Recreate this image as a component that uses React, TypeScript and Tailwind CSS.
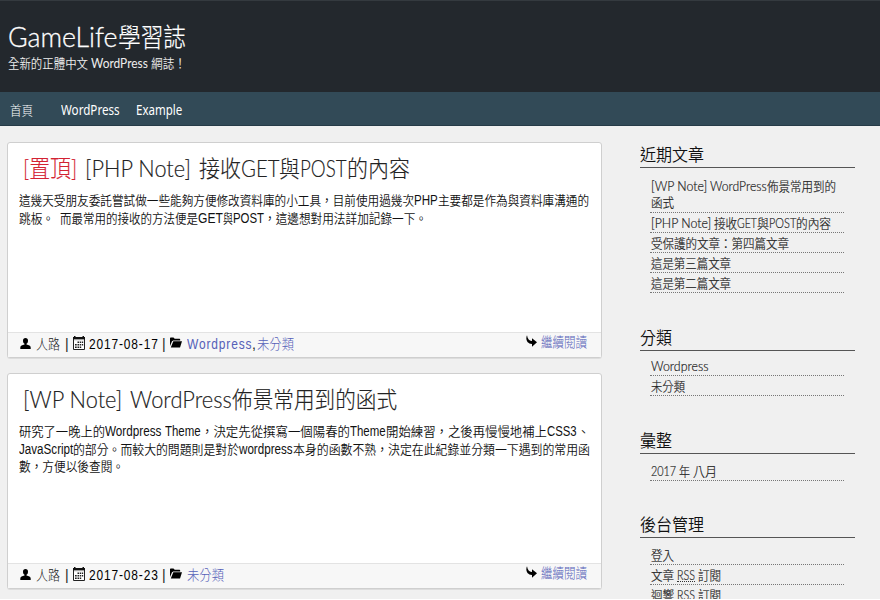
import { useLayoutEffect, useRef, type ReactNode } from "react";

// Condenses a run of text so that it fills the width of its box.
function Fit({ className = "", children }: { className?: string; children: ReactNode }) {
  const inner = useRef<HTMLSpanElement>(null);
  useLayoutEffect(() => {
    const fit = () => {
      const el = inner.current;
      if (!el || !el.parentElement) return;
      el.style.transform = `scaleX(${el.parentElement.clientWidth / el.offsetWidth})`;
    };
    fit();
    document.fonts?.ready.then(fit);
  }, []);
  return (
    <span className={`block shrink-0 whitespace-pre ${className}`}>
      <span ref={inner} className="inline-block origin-left">{children}</span>
    </span>
  );
}

const geo = "font-['Lato','Noto_Sans_CJK_TC',sans-serif]";
const arial = "font-['Liberation_Sans','Noto_Sans_CJK_TC',sans-serif]";

function UserIcon() {
  return (
    <svg className="h-[11px] w-[11px]" viewBox="0 0 11 11">
      <path d="M5.5 0C3.9 0 3 1.100 3 2.700c0 1.400.6 2.600 1.500 3.100v.8C2.300 7 .3 8 .3 9.500V11h10.400V9.500C10.700 8 8.700 7 6.500 6.600v-.8C7.400 5.300 8 4.100 8 2.700 8 1.100 7.100 0 5.500 0z" />
    </svg>
  );
}

function CalendarIcon() {
  return (
    <svg className="h-[14px] w-[12px]" viewBox="0 0 12 14">
      <path d="M.5 1.500h11v12H.5z" fill="#fff" stroke="#222" />
      <path d="M1 0h1.500v1h7V0H11v1h1v2.200H0V1h1z" fill="#111" />
      <path d="M1 3.200h10v1H1z" fill="#999" />
      <path d="M4.500 5.500h1.500v1.500H4.500zM6.700 5.500h1.500v1.500H6.700zM8.900 5.500h1.300v1.500H8.900zM2 8h1.700v1.500H2zM4.500 8h1.500v1.500H4.500zM6.700 8h1.500v1.500H6.700zM8.900 8h1.300v1.500H8.900zM2 10.500h1.700V12H2zM4.500 10.500h1.500V12H4.500zM6.700 10.500h1.500V12H6.700z" fill="#222" />
    </svg>
  );
}

function FolderIcon() {
  return (
    <svg className="h-[11px] w-[12px]" viewBox="0 0 12 11">
      <path d="M0 9V1.500C0 .9.4.5 1 .5h2.500l1.200 1.300h4.500c.6 0 1 .4 1 1v.8H3.200L2 4.300z" />
      <path d="M3.300 4.300H12l-2 6.200H.8z" />
    </svg>
  );
}

function ReplyIcon() {
  return (
    <svg className="h-[12px] w-[11px]" viewBox="0 0 11 12">
      <path d="M1 .2C-.7 4 .8 8.800 6 8.900V11.800L11 7.300 6 3.200v2.700C3.200 6 1.700 4 1 .2z" />
    </svg>
  );
}

function Meta({ date, children }: { date: string; children: ReactNode }) {
  return (
    <footer className={`flex h-[25px] justify-between border-t border-[#e3e3e3] bg-[#f7f7f7] pl-[12px] pr-[14px] text-[14px] leading-[22px] text-[#222] ${arial}`}>
      <div className="flex">
        <div className="pt-[5px]"><UserIcon /></div>
        <Fit className="ml-[5px] w-[24px] font-light">人路</Fit>
        <span className="ml-[5px] w-[4px]">|</span>
        <div className="ml-[4px] pt-[3px]"><CalendarIcon /></div>
        <Fit className="ml-[4px] w-[70px] tracking-[1px] text-black">{date}</Fit>
        <span className="ml-[3px] w-[4px]">|</span>
        <div className="ml-[4px] pt-[4px]"><FolderIcon /></div>
        <div className="ml-[5px] flex text-[#5560b8]">{children}</div>
      </div>
      <div className="flex leading-[18px]">
        <div className="pt-[2px]"><ReplyIcon /></div>
        <Fit className="ml-[4px] w-[46px] font-light text-[#5560b8]">繼續閱讀</Fit>
      </div>
    </footer>
  );
}

function Card({ title, body, footer }: { title: ReactNode; body: ReactNode; footer: ReactNode }) {
  return (
    <article className="flex h-[216px] flex-col rounded-[3px] border border-[#cfcfcf] bg-white shadow-[0_1px_0_#ddd]">
      <h2 className={`flex h-[47px] items-baseline pl-[15px] pt-[9px] text-[24px] font-light leading-[32px] text-[#222] [-webkit-text-stroke:0.15px_currentColor] ${geo}`}>{title}</h2>
      <div className={`grow pl-[11px] pt-px text-[13px] leading-[18px] text-[#111] ${arial}`}>{body}</div>
      {footer}
    </article>
  );
}

function Line({ children }: { children: ReactNode }) {
  return <div className="flex h-[18px] items-baseline">{children}</div>;
}

function Widget({ titleWidth, title, className, listTop, children }: { titleWidth: string; title: string; className: string; listTop: string; children: ReactNode }) {
  return (
    <section className={className}>
      <h3 className="flex h-[25px] border-b border-[#555] text-[17.5px] font-[350] leading-[24px] text-[#111]">
        <Fit className={titleWidth}>{title}</Fit>
      </h3>
      <ul className={`ml-[10px] mr-[11px] text-[13px] font-light leading-[18px] text-[#222] [-webkit-text-stroke:0.2px_currentColor] ${listTop}`}>{children}</ul>
    </section>
  );
}

function Item({ children }: { children: ReactNode }) {
  return <li className="border-b border-dotted border-[#777] pl-px pt-px"><div className="flex h-[18px] items-baseline">{children}</div></li>;
}

export default function App() {
  return (
    <div lang="zh-TW" className={`h-[600px] w-[880px] overflow-hidden border-b border-white bg-[#f0f0f0] ${geo}`}>
      <header className="h-[92px] border-t border-[#343a3f] bg-[#23282d] pl-[8px] pt-[19px] text-white">
        <h1 className="flex h-[33px] items-baseline text-[26px] leading-[34px]">
          <Fit className="w-[110px] text-[27px] font-light [-webkit-text-stroke:0.3px_white]">GameLife</Fit>
          <Fit className="w-[68px] font-light [-webkit-text-stroke:0.2px_white]">學習誌</Fit>
        </h1>
        <p className="flex items-baseline text-[13px] leading-[19px] text-[#eee]">
          <Fit className="w-[80px] font-[350]">全新的正體中文</Fit>
          <Fit className="ml-[3px] w-[57px] text-[14px]">WordPress</Fit>
          <Fit className="ml-[3px] w-[35px] font-[350]">網誌！</Fit>
        </p>
      </header>
      <nav className="flex h-[34px] items-baseline border-b border-[#263b47] bg-[#324a57] pl-[10px] pt-[8px] font-['Noto_Sans','Noto_Sans_CJK_TC',sans-serif] text-[13px] leading-[20px] text-white">
        <Fit className="w-[23px] font-light">首頁</Fit>
        <Fit className="ml-[28px] w-[59px] text-[14px]">WordPress</Fit>
        <Fit className="ml-[16px] w-[46px] text-[14px]">Example</Fit>
      </nav>
      <div className="flex">
        <main className="ml-[7px] w-[595px] shrink-0 pt-[16px]">
          <Card
            title={<>
              <Fit className="w-[54px] text-[#d32232]">[置頂]</Fit>
              <Fit className="ml-[8px] w-[106px]">[PHP Note]</Fit>
              <Fit className="ml-[8px] w-[42px] text-[23px]">接收</Fit>
              <Fit className="w-[38px]">GET</Fit>
              <Fit className="w-[21px] text-[23px]">與</Fit>
              <Fit className="w-[47px]">POST</Fit>
              <Fit className="w-[63px] text-[23px]">的內容</Fit>
            </>}
            body={<>
              <Line>
                <Fit className="w-[395px] font-[350]">這幾天受朋友委託嘗試做一些能夠方便修改資料庫的小工具，目前使用過幾次</Fit>
                <Fit className="w-[24px] text-[14px]">PHP</Fit>
                <Fit className="w-[151px] font-[350]">主要都是作為與資料庫溝通的</Fit>
              </Line>
              <Line>
                <Fit className="w-[35px] font-[350]">跳板。</Fit>
                <Fit className="ml-[6px] w-[138px] font-[350]">而最常用的接收的方法便是</Fit>
                <Fit className="w-[25px] text-[14px]">GET</Fit>
                <Fit className="w-[10px] font-[350]">與</Fit>
                <Fit className="w-[31px] text-[14px]">POST</Fit>
                <Fit className="w-[163px] font-[350]">，這邊想對用法詳加記錄一下。</Fit>
              </Line>
            </>}
            footer={<Meta date="2017-08-17">
              <Fit className="w-[65px] tracking-[1px]">Wordpress</Fit>
              <span className="w-[5px] text-[#222]">,</span>
              <Fit className="w-[37px] font-light">未分類</Fit>
            </Meta>}
          />
          <div className="h-[15px]" />
          <Card
            title={<>
              <Fit className="w-[99px]">[WP Note]</Fit>
              <Fit className="ml-[8px] w-[102px]">WordPress</Fit>
              <Fit className="w-[165px] text-[23px]">佈景常用到的函式</Fit>
            </>}
            body={<>
              <Line>
                <Fit className="w-[86px] font-[350]">研究了一晚上的</Fit>
                <Fit className="w-[56px] text-[14px]">Wordpress</Fit>
                <Fit className="ml-[4px] w-[36px] text-[14px]">Theme</Fit>
                <Fit className="w-[149px] font-[350]">，決定先從撰寫一個陽春的</Fit>
                <Fit className="w-[36px] text-[14px]">Theme</Fit>
                <Fit className="w-[161px] font-[350]">開始練習，之後再慢慢地補上</Fit>
                <Fit className="w-[30px] text-[14px]">CSS3</Fit>
                <Fit className="w-[13px] font-[350]">、</Fit>
              </Line>
              <Line>
                <Fit className="w-[54px] text-[14px]">JavaScript</Fit>
                <Fit className="w-[166px] font-[350]">的部分。而較大的問題則是對於</Fit>
                <Fit className="w-[54px] text-[14px]">wordpress</Fit>
                <Fit className="w-[297px] font-[350]">本身的函數不熟，決定在此紀錄並分類一下遇到的常用函</Fit>
              </Line>
              <Line><Fit className="w-[105px] font-[350]">數，方便以後查閱。</Fit></Line>
            </>}
            footer={<Meta date="2017-08-23"><Fit className="w-[37px] font-light">未分類</Fit></Meta>}
          />
        </main>
        <aside className="ml-[38px] w-[215px] pt-[17px]">
          <Widget title="近期文章" titleWidth="w-[64px]" className="h-[183px]" listTop="pt-[8px]">
            <li className="h-[37px] border-b border-dotted border-[#777] pl-px pt-px">
              <Line>
                <Fit className="w-[56px]">[WP Note]</Fit>
                <Fit className="ml-[3px] w-[57px]">WordPress</Fit>
                <Fit className="w-[69px]">佈景常用到的</Fit>
              </Line>
              <div className="flex leading-[15px]"><Fit className="w-[23px]">函式</Fit></div>
            </li>
            <Item>
              <Fit className="w-[60px]">[PHP Note]</Fit>
              <Fit className="ml-[3px] w-[23px]">接收</Fit>
              <Fit className="w-[20px]">GET</Fit>
              <Fit className="w-[12px]">與</Fit>
              <Fit className="w-[27px]">POST</Fit>
              <Fit className="w-[35px]">的內容</Fit>
            </Item>
            <Item><Fit className="w-[138px]">受保護的文章：第四篇文章</Fit></Item>
            <Item><Fit className="w-[80px]">這是第三篇文章</Fit></Item>
            <Item><Fit className="w-[80px]">這是第二篇文章</Fit></Item>
          </Widget>
          <Widget title="分類" titleWidth="w-[32px]" className="h-[103px]" listTop="pt-[5px]">
            <Item><Fit className="w-[57px]">Wordpress</Fit></Item>
            <Item><Fit className="w-[34px]">未分類</Fit></Item>
          </Widget>
          <Widget title="彙整" titleWidth="w-[32px]" className="h-[84px]" listTop="pt-[7px]">
            <Item>
              <Fit className="w-[25px]">2017</Fit>
              <Fit className="ml-[3px] w-[11px]">年</Fit>
              <Fit className="ml-[3px] w-[24px]">八月</Fit>
            </Item>
          </Widget>
          <Widget title="後台管理" titleWidth="w-[64px]" className="h-[100px]" listTop="pt-[7px]">
            <Item><Fit className="w-[23px]">登入</Fit></Item>
            {["文章", "迴響"].map((name) => (
              <Item key={name}>
                <Fit className="w-[23px]">{name}</Fit>
                <abbr className="ml-[3px] h-[16px] border-b border-dotted border-[#333] no-underline"><Fit className="w-[18px]">RSS</Fit></abbr>
                <Fit className="ml-[3px] w-[23px]">訂閱</Fit>
              </Item>
            ))}
          </Widget>
        </aside>
      </div>
    </div>
  );
}
